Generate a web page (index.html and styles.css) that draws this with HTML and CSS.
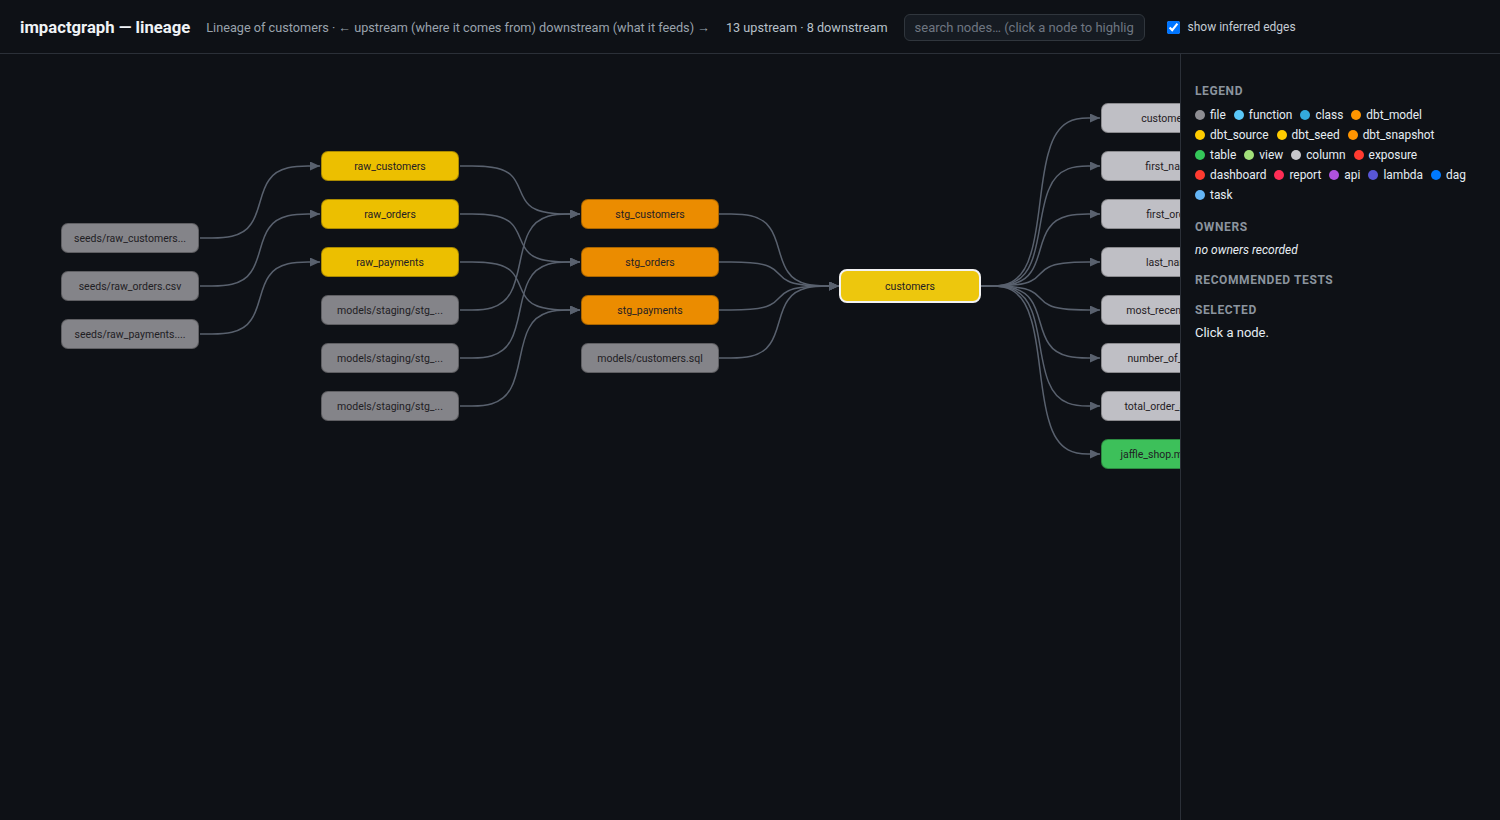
FILE: index.html
```html
<!DOCTYPE html>
<html lang="en">
<head>
<meta charset="utf-8">
<title>impactgraph — lineage</title>
<link rel="stylesheet" href="styles.css">
</head>
<body>
<div class="app">
  <header class="top">
    <h1 class="title">impactgraph — lineage</h1>
    <span class="sub">Lineage of customers · ← upstream (where it comes from) downstream (what it feeds) →</span>
    <span class="stats">13 upstream · 8 downstream</span>
    <input class="search" type="text" placeholder="search nodes… (click a node to highlight its path)">
    <label class="toggle"><input type="checkbox" checked> <span>show inferred edges</span></label>
  </header>
  <main class="main">
    <section class="canvas">
      <svg class="edges" width="1180" height="766" viewBox="0 0 1180 766">
        <defs>
          <marker id="arr" viewBox="0 0 10 10" refX="10" refY="5" markerWidth="10" markerHeight="9" markerUnits="userSpaceOnUse" orient="auto" preserveAspectRatio="none">
            <path d="M0 0 L10 5 L0 10 z" class="arrow"/>
          </marker>
        </defs>
        <g transform="translate(0,-54)" class="edge-group">
          <path d="M200 238 L212 238 C222 238 242 238 251 224 C260 212 260 192 269 180 C278 166 298 166 308 166 L320 166"/>
          <path d="M200 286 L212 286 C222 286 242 286 251 272 C260 260 260 240 269 228 C278 214 298 214 308 214 L320 214"/>
          <path d="M200 334 L212 334 C222 334 242 334 251 320 C260 308 260 288 269 276 C278 262 298 262 308 262 L320 262"/>

          <path d="M460 166 L472 166 C482 166 502 166 511 175 C520 183 520 197 529 205 C538 214 558 214 568 214 L580 214"/>
          <path d="M460 214 L472 214 C482 214 502 214 511 223 C520 231 520 245 529 253 C538 262 558 262 568 262 L580 262"/>
          <path d="M460 262 L472 262 C482 262 502 262 511 271 C520 279 520 293 529 301 C538 310 558 310 568 310 L580 310"/>
          <path d="M460 310 L472 310 C482 310 502 310 511 292 C520 276 520 248 529 232 C538 214 558 214 568 214 L580 214"/>
          <path d="M460 358 L472 358 C482 358 502 358 511 340 C520 324 520 296 529 280 C538 262 558 262 568 262 L580 262"/>
          <path d="M460 406 L472 406 C482 406 502 406 511 388 C520 372 520 344 529 328 C538 310 558 310 568 310 L580 310"/>

          <path d="M719 214 L731 214 C741 214 761 214 770 228 C779 240 779 260 788 272 C797 286 817 286 827 286 L839 286"/>
          <path d="M719 262 L731 262 C741 262 761 262 770 267 C779 271 779 277 788 281 C797 286 817 286 827 286 L839 286"/>
          <path d="M719 310 L731 310 C741 310 761 310 770 305 C779 301 779 295 788 291 C797 286 817 286 827 286 L839 286"/>
          <path d="M719 358 L731 358 C741 358 761 358 770 344 C779 332 779 312 788 300 C797 286 817 286 827 286 L839 286"/>

          <path d="M980 286 L992 286 C1002 286 1022 286 1031 253 C1040 225 1040 179 1049 151 C1058 118 1078 118 1088 118 L1100 118"/>
          <path d="M980 286 L992 286 C1002 286 1022 286 1031 263 C1040 243 1040 209 1049 189 C1058 166 1078 166 1088 166 L1100 166"/>
          <path d="M980 286 L992 286 C1002 286 1022 286 1031 272 C1040 260 1040 240 1049 228 C1058 214 1078 214 1088 214 L1100 214"/>
          <path d="M980 286 L992 286 C1002 286 1022 286 1031 281 C1040 277 1040 271 1049 267 C1058 262 1078 262 1088 262 L1100 262"/>
          <path d="M980 286 L992 286 C1002 286 1022 286 1031 291 C1040 295 1040 301 1049 305 C1058 310 1078 310 1088 310 L1100 310"/>
          <path d="M980 286 L992 286 C1002 286 1022 286 1031 300 C1040 312 1040 332 1049 344 C1058 358 1078 358 1088 358 L1100 358"/>
          <path d="M980 286 L992 286 C1002 286 1022 286 1031 309 C1040 329 1040 363 1049 383 C1058 406 1078 406 1088 406 L1100 406"/>
          <path d="M980 286 L992 286 C1002 286 1022 286 1031 319 C1040 347 1040 393 1049 421 C1058 454 1078 454 1088 454 L1100 454"/>
        </g>
      </svg>

      <div class="node k-file cx1 y238">seeds/raw_customers...</div>
      <div class="node k-file cx1 y286">seeds/raw_orders.csv</div>
      <div class="node k-file cx1 y334">seeds/raw_payments....</div>

      <div class="node k-seed cx2 y166">raw_customers</div>
      <div class="node k-seed cx2 y214">raw_orders</div>
      <div class="node k-seed cx2 y262">raw_payments</div>
      <div class="node k-file cx2 y310">models/staging/stg_...</div>
      <div class="node k-file cx2 y358">models/staging/stg_...</div>
      <div class="node k-file cx2 y406">models/staging/stg_...</div>

      <div class="node k-model cx3 y214">stg_customers</div>
      <div class="node k-model cx3 y262">stg_orders</div>
      <div class="node k-model cx3 y310">stg_payments</div>
      <div class="node k-file cx3 y358">models/customers.sql</div>

      <div class="node focus">customers</div>

      <div class="node k-col cx5 y118">customer_id</div>
      <div class="node k-col cx5 y166">first_name</div>
      <div class="node k-col cx5 y214">first_order</div>
      <div class="node k-col cx5 y262">last_name</div>
      <div class="node k-col cx5 y310">most_recent_order</div>
      <div class="node k-col cx5 y358">number_of_orders</div>
      <div class="node k-col cx5 y406">total_order_amount</div>
      <div class="node k-table cx5 y454">jaffle_shop.main.cu...</div>
    </section>

    <aside class="side">
      <div class="block">
        <h4>Legend</h4>
        <ul class="legend">
          <li><i class="dot d-file"></i>file</li>
          <li><i class="dot d-function"></i>function</li>
          <li><i class="dot d-class"></i>class</li>
          <li><i class="dot d-model"></i>dbt_model</li>
          <li><i class="dot d-source"></i>dbt_source</li>
          <li><i class="dot d-seed"></i>dbt_seed</li>
          <li><i class="dot d-snapshot"></i>dbt_snapshot</li>
          <li><i class="dot d-table"></i>table</li>
          <li><i class="dot d-view"></i>view</li>
          <li><i class="dot d-column"></i>column</li>
          <li><i class="dot d-exposure"></i>exposure</li>
          <li><i class="dot d-dashboard"></i>dashboard</li>
          <li><i class="dot d-report"></i>report</li>
          <li><i class="dot d-api"></i>api</li>
          <li><i class="dot d-lambda"></i>lambda</li>
          <li><i class="dot d-dag"></i>dag</li>
          <li><i class="dot d-task"></i>task</li>
        </ul>
      </div>
      <div class="block tight">
        <h4>Owners</h4>
        <p class="muted-i">no owners recorded</p>
      </div>
      <div class="block">
        <h4>Recommended tests</h4>
      </div>
      <div class="block">
        <h4>Selected</h4>
        <p class="plain">Click a node.</p>
      </div>
    </aside>
  </main>
</div>
</body>
</html>
```

FILE: styles.css
```css
* { box-sizing: border-box; }
html, body {
  margin: 0;
  padding: 0;
  background: #0e1116;
  color: #e6edf3;
  font-family: "Segoe UI", Roboto, "Noto Sans", "Liberation Sans", sans-serif;
}
.app {
  width: 1500px;
  height: 820px;
  display: flex;
  flex-direction: column;
  overflow: hidden;
}
.top {
  height: 54px;
  flex: none;
  display: flex;
  align-items: center;
  gap: 16px;
  padding: 1px 20px 0;
  border-bottom: 1px solid #2b3038;
}
.title {
  margin: 0;
  font-size: 16.7px;
  font-weight: 700;
  color: #f0f3f6;
  white-space: nowrap;
}
.sub {
  font-size: 12.7px;
  color: #9aa3ad;
  white-space: nowrap;
}
.stats {
  font-size: 12.7px;
  color: #b7c0c9;
  white-space: nowrap;
}
.search {
  width: 241px;
  height: 27px;
  padding: 0 10px;
  background: #161b22;
  border: 1px solid #30363d;
  border-radius: 6px;
  color: #e6edf3;
  font-family: inherit;
  font-size: 13px;
  outline: none;
}
.search::placeholder { color: #6e7681; }
.toggle {
  display: flex;
  align-items: center;
  gap: 5px;
  font-size: 12px;
  color: #c4ccd4;
  margin-left: 2px;
  white-space: nowrap;
}
.toggle input { margin: 0 3px 0 4px; width: 13px; height: 13px; }

.main {
  flex: 1;
  display: flex;
  min-height: 0;
}
.canvas {
  flex: 1;
  position: relative;
  overflow: hidden;
}
.edges {
  position: absolute;
  left: 0;
  top: 0;
  display: block;
}
.edge-group path {
  fill: none;
  stroke: #59616e;
  stroke-width: 1.5;
  marker-end: url(#arr);
}
.arrow { fill: #59616e; }

.node {
  position: absolute;
  width: 138px;
  height: 30px;
  border-radius: 7px;
  border: 1px solid rgba(0, 0, 0, 0.28);
  font-size: 10.5px;
  line-height: 29px;
  text-align: center;
  white-space: nowrap;
  overflow: hidden;
  color: #1f2024;
}
.k-file { background: #848489; }
.k-seed { background: #ecbf00; }
.k-model { background: #eb8c00; }
.k-col { background: #bfbfc5; }
.k-table { background: #3dc05a; }
.focus {
  left: 839px;
  top: 215px;
  width: 142px;
  height: 34px;
  line-height: 31px;
  border: 2px solid #f2f2f2;
  background: #edc70d;
  border-radius: 8px;
}
.cx1 { left: 61px; }
.cx2 { left: 321px; }
.cx3 { left: 581px; }
.cx5 { left: 1101px; }
.y118 { top: 49px; }
.y166 { top: 97px; }
.y214 { top: 145px; }
.y238 { top: 169px; }
.y262 { top: 193px; }
.y286 { top: 217px; }
.y310 { top: 241px; }
.y334 { top: 265px; }
.y358 { top: 289px; }
.y406 { top: 337px; }
.y454 { top: 385px; }

.side {
  width: 320px;
  flex: none;
  border-left: 1px solid #2b3038;
  padding: 29px 25px 0 14px;
}
.block { margin-bottom: 14px; }
.block.tight { margin-bottom: 13px; }
.block h4 {
  margin: 0 0 6px;
  font-size: 12px;
  line-height: 16px;
  font-weight: 700;
  text-transform: uppercase;
  letter-spacing: 0.6px;
  color: #8b949e;
}
.legend {
  list-style: none;
  margin: 0;
  padding: 0;
  display: flex;
  flex-wrap: wrap;
  column-gap: 8px;
}
.legend li {
  display: flex;
  align-items: center;
  gap: 5px;
  font-size: 11.9px;
  line-height: 20px;
  color: #e6edf3;
}
.dot {
  width: 10px;
  height: 10px;
  border-radius: 50%;
  display: inline-block;
}
.d-file { background: #8e8e93; }
.d-function { background: #5ac8fa; }
.d-class { background: #34aadc; }
.d-model { background: #ff9500; }
.d-source { background: #ffcc00; }
.d-seed { background: #ffcc00; }
.d-snapshot { background: #ff9500; }
.d-table { background: #34c759; }
.d-view { background: #a2e07a; }
.d-column { background: #c7c7cc; }
.d-exposure { background: #ff3b30; }
.d-dashboard { background: #ff3b30; }
.d-report { background: #ff2d55; }
.d-api { background: #af52de; }
.d-lambda { background: #5856d6; }
.d-dag { background: #007aff; }
.d-task { background: #64b5f6; }
.muted-i {
  margin: 0;
  font-size: 12px;
  line-height: 18px;
  font-style: italic;
  color: #e6edf3;
}
.plain {
  margin: 0;
  font-size: 13px;
  line-height: 17px;
  color: #e6edf3;
}
```
